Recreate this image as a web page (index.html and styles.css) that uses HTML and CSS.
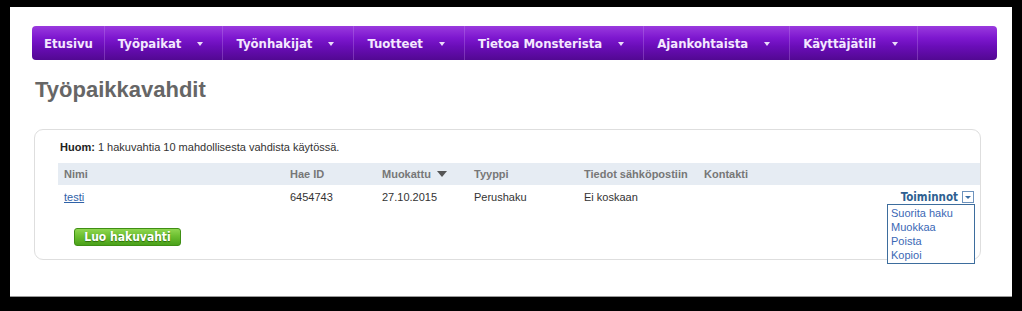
FILE: index.html
```html
<!DOCTYPE html>
<html lang="fi">
<head>
    <meta charset="UTF-8">
    <meta name="viewport" content="width=device-width, initial-scale=1.0">
    <title>Työpaikkavahdit</title>
    <link rel="stylesheet" href="styles.css">
</head>
<body>
    <div class="page">
        <nav class="mainnav">
            <ul>
                <li><a href="#">Etusivu</a></li>
                <li><a href="#">Työpaikat<span class="caret"></span></a></li>
                <li><a href="#">Työnhakijat<span class="caret"></span></a></li>
                <li><a href="#">Tuotteet<span class="caret"></span></a></li>
                <li><a href="#">Tietoa Monsterista<span class="caret"></span></a></li>
                <li><a href="#">Ajankohtaista<span class="caret"></span></a></li>
                <li><a href="#">Käyttäjätili<span class="caret"></span></a></li>
            </ul>
        </nav>

        <h1 class="title">Työpaikkavahdit</h1>

        <div class="panel">
            <p class="note"><b>Huom:</b> 1 hakuvahtia 10 mahdollisesta vahdista käytössä.</p>

            <table class="alerts">
                <thead>
                    <tr>
                        <th class="col-name">Nimi</th>
                        <th class="col-id">Hae ID</th>
                        <th class="col-date">Muokattu <span class="sort"></span></th>
                        <th class="col-type">Tyyppi</th>
                        <th class="col-mail">Tiedot sähköpostiin</th>
                        <th class="col-contact">Kontakti</th>
                        <th></th>
                    </tr>
                </thead>
                <tbody>
                    <tr>
                        <td><a href="#" class="link">testi</a></td>
                        <td>6454743</td>
                        <td>27.10.2015</td>
                        <td>Perushaku</td>
                        <td>Ei koskaan</td>
                        <td></td>
                        <td class="actions">
                            <span class="actions-label">Toiminnot</span><span class="actions-btn"></span>
                            <ul class="actions-menu">
                                <li>Suorita haku</li>
                                <li>Muokkaa</li>
                                <li>Poista</li>
                                <li>Kopioi</li>
                            </ul>
                        </td>
                    </tr>
                </tbody>
            </table>

            <button type="button" class="btn-green">Luo hakuvahti</button>
        </div>
    </div>
</body>
</html>
```

FILE: styles.css
```css
body {
    margin: 0;
    background: #000;
    font-family: "Liberation Sans", Arial, sans-serif;
}

.page {
    background: #fff;
    margin: 7px 10px 0 10px;
    height: 290px;
    padding: 19px 15px 0 22px;
    box-sizing: border-box;
    border-bottom: 1px solid #9a9a9a;
}

/* Main navigation */
.mainnav {
    height: 34px;
    border-radius: 4px;
    background: linear-gradient(#9a3ade 0%, #7d17cf 35%, #6a0db8 60%, #520892 100%);
}

.mainnav ul {
    list-style: none;
    margin: 0;
    padding: 0;
    display: flex;
    height: 100%;
}

.mainnav li {
    display: flex;
    align-items: center;
    border-right: 1px solid rgba(200, 150, 240, 0.3);
}

.mainnav a {
    color: #f4e8ff;
    text-decoration: none;
    font-family: "DejaVu Sans Condensed", "DejaVu Sans", sans-serif;
    font-weight: bold;
    font-size: 13px;
    padding: 0 11px 0 13px;
    display: flex;
    align-items: center;
}

.mainnav li:first-child a {
    padding-left: 12px;
}

.caret {
    display: inline-block;
    margin-left: 16px;
    margin-right: 8px;
    border-left: 3px solid transparent;
    border-right: 3px solid transparent;
    border-top: 4px solid #eadcfa;
    margin-top: 2px;
}

/* Heading */
.title {
    margin: 16px 0 0 3px;
    font-size: 22px;
    color: #666;
    font-weight: bold;
    line-height: 28px;
}

/* Panel */
.panel {
    margin: 25px 16px 0 2px;
    border: 1px solid #dedede;
    border-radius: 9px;
    padding: 11px 0 13px 23px;
    font-size: 11px;
    color: #333;
}

.note {
    margin: 0 0 9px 2px;
    line-height: 13px;
}

.note b {
    color: #222;
}

.alerts {
    width: 100%;
    border-collapse: collapse;
    font-size: 11px;
}

.alerts th {
    background: #e6ecf3;
    color: #777;
    text-align: left;
    font-weight: bold;
    height: 22px;
    padding: 0 0 0 6px;
}

.alerts td {
    height: 23px;
    padding: 0 0 0 6px;
    color: #333;
    vertical-align: middle;
}

.col-name { width: 220px; }
.col-id { width: 86px; }
.col-date { width: 86px; }
.col-type { width: 104px; }
.col-mail { width: 114px; }
.col-contact { width: 70px; }

.sort {
    display: inline-block;
    border-left: 5px solid transparent;
    border-right: 5px solid transparent;
    border-top: 6px solid #555;
    margin-left: 3px;
    vertical-align: 1px;
}

.link {
    color: #2f62a8;
}

.actions {
    position: relative;
    text-align: right;
    padding-right: 6px !important;
}

.actions-label {
    color: #2e5f91;
    font-weight: bold;
    font-size: 11.5px;
    font-family: "DejaVu Sans Condensed", "DejaVu Sans", sans-serif;
}

.actions-btn {
    display: inline-block;
    width: 10px;
    height: 10px;
    border: 1px solid #6e93bd;
    margin-left: 4px;
    vertical-align: -2px;
    position: relative;
    background: #fff;
}

.actions-btn::after {
    content: "";
    position: absolute;
    left: 2px;
    top: 4px;
    border-left: 3px solid transparent;
    border-right: 3px solid transparent;
    border-top: 3px solid #3a6ea5;
}

.actions-menu {
    position: absolute;
    right: 5px;
    top: 19px;
    width: 83px;
    margin: 0;
    padding: 1px 0 1px 3px;
    list-style: none;
    text-align: left;
    background: #fff;
    border: 1px solid #3d6d9d;
    z-index: 2;
}

.actions-menu li {
    color: #3b68b5;
    line-height: 14px;
    font-size: 11px;
}

.btn-green {
    margin: 20px 0 0 16px;
    width: 107px;
    height: 18px;
    padding: 0;
    border: 1px solid #3f8f14;
    border-radius: 3px;
    background: linear-gradient(#8fd650 0%, #6cbf30 45%, #4aa11a 100%);
    color: #fff;
    font-family: "DejaVu Sans Condensed", "DejaVu Sans", sans-serif;
    font-weight: bold;
    font-size: 12px;
    text-shadow: 0 1px 1px #2d6a0a;
    cursor: pointer;
    display: block;
}
```
